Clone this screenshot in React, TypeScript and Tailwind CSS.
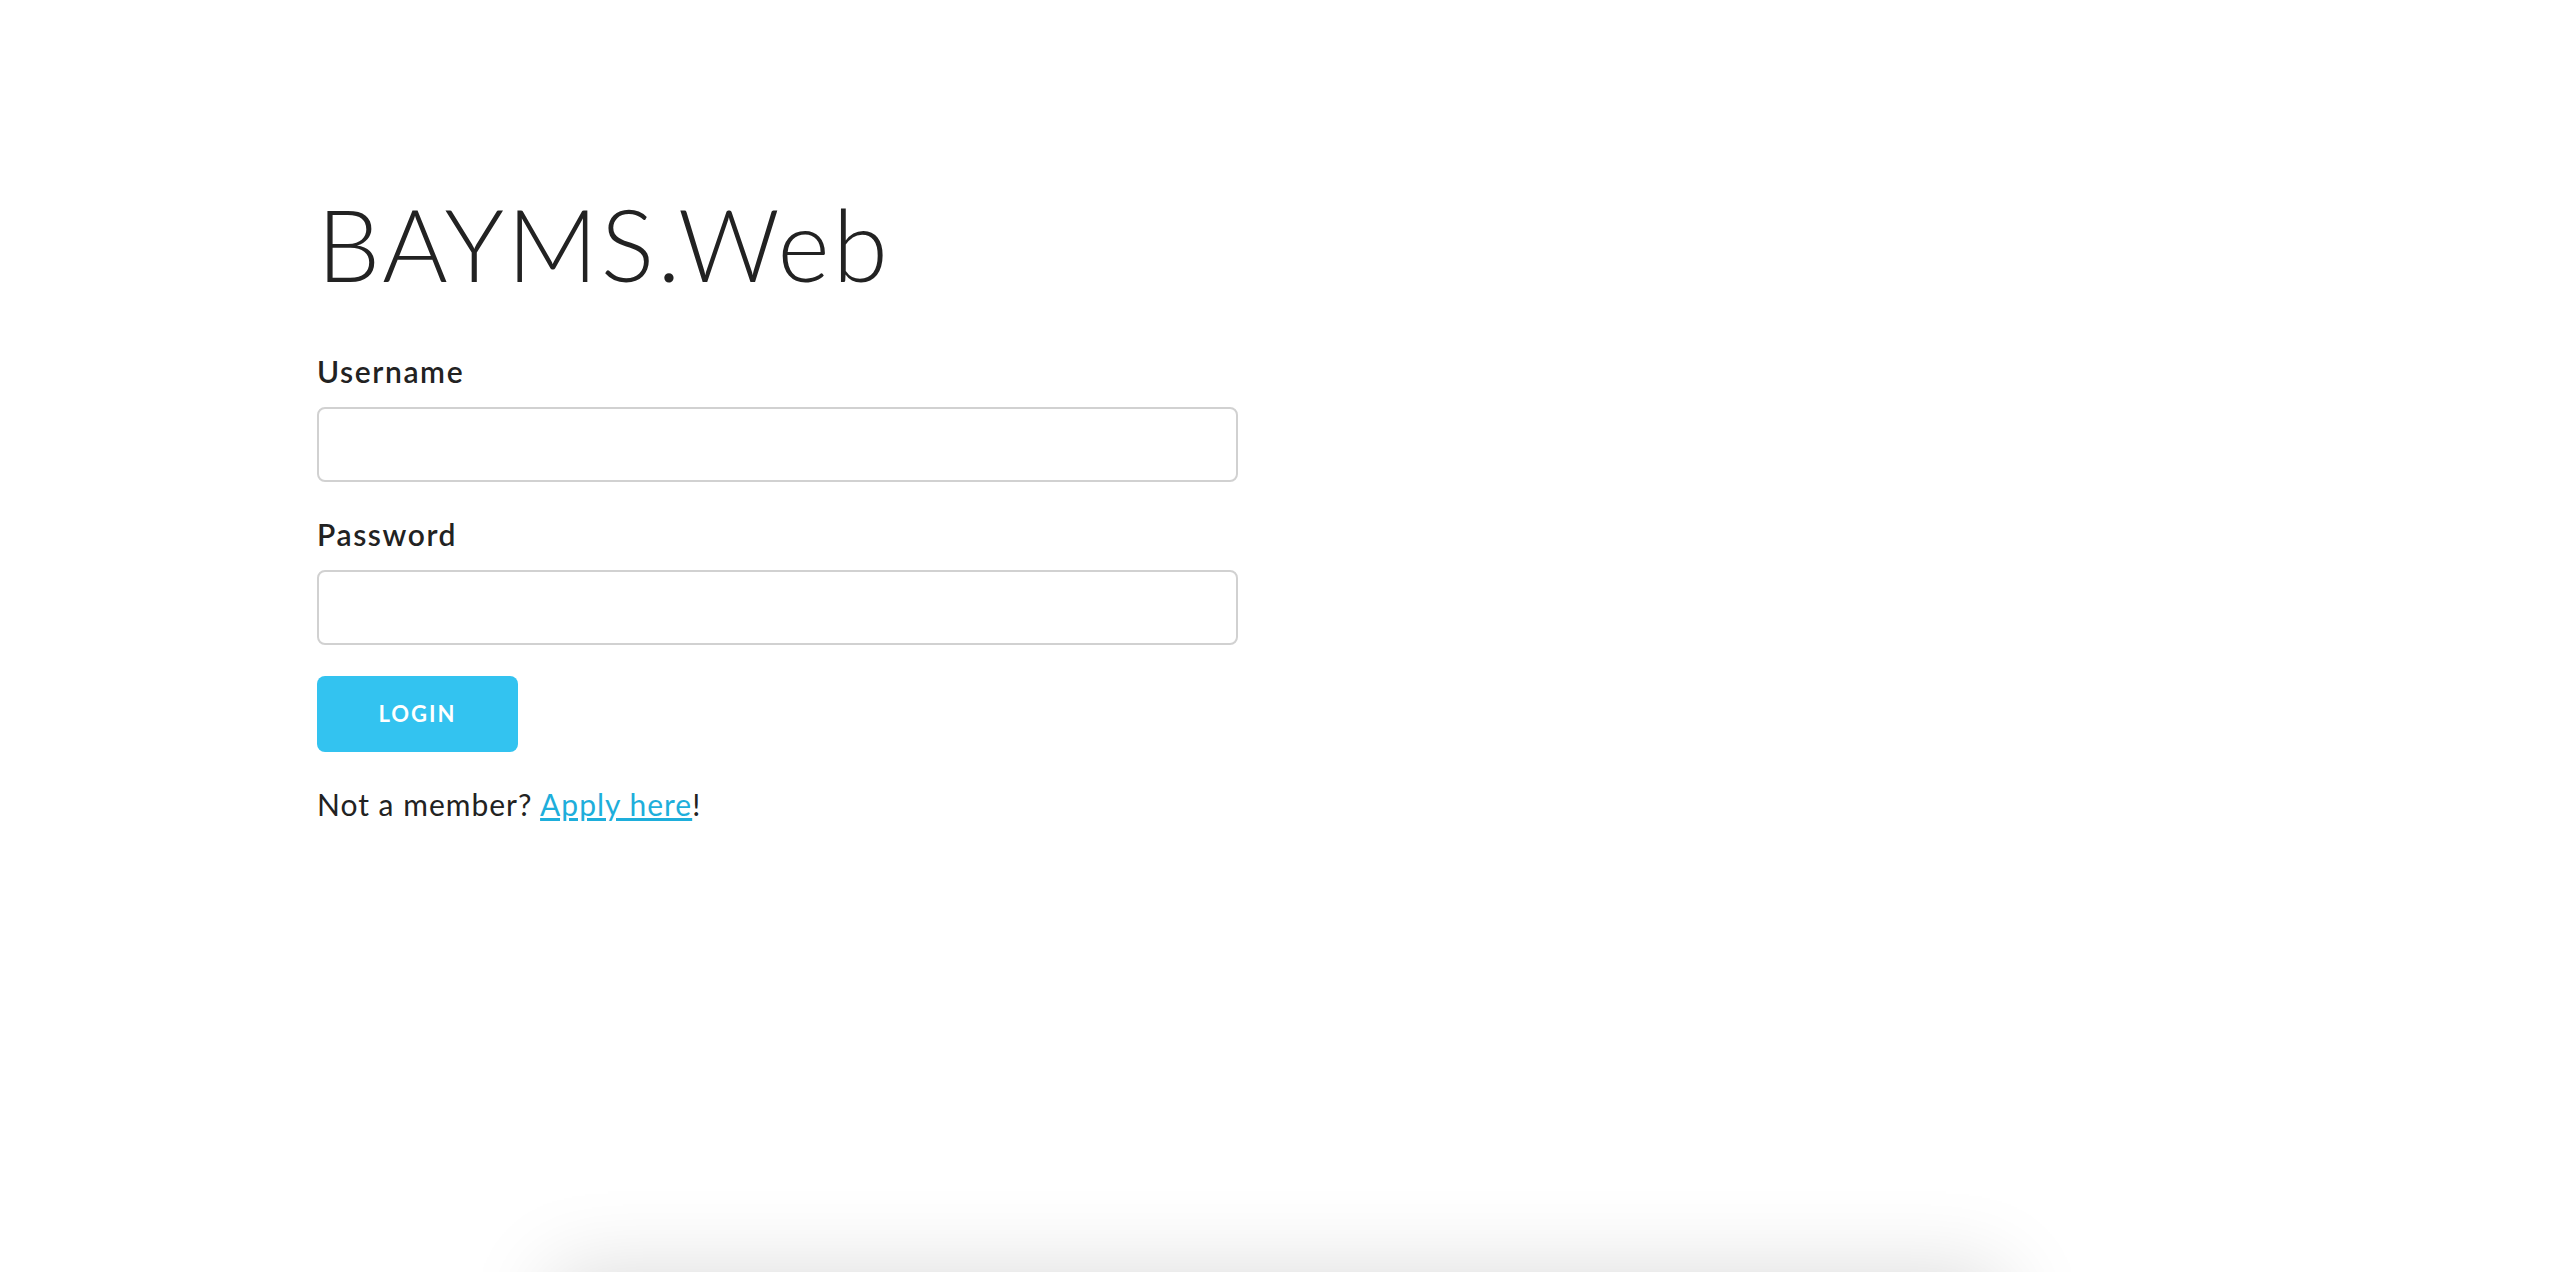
import React from "react";

export default function App() {
  return (
    <div className="bg-white font-['Lato','Liberation_Sans',sans-serif] text-[#222]">
      <div className="h-[1272px] pl-[317px] pt-[183px]">
        <h1 className="m-0 text-[100px] font-light leading-[120px] tracking-[3px] text-[#222]">
          BAYMS.Web
        </h1>
        <form className="mt-[44px] w-[921px]" onSubmit={(e) => e.preventDefault()}>
          <label className="mb-[12px] block text-[30px] font-semibold leading-[48px] tracking-[1.6px]">Username</label>
          <input
            type="text"
            className="box-border block h-[75px] w-full rounded-[8px] border-2 border-[#d1d1d1] bg-white px-[20px] text-[30px] outline-none"
          />
          <label className="mb-[12px] mt-[28px] block text-[30px] font-semibold leading-[48px] tracking-[1.6px]">Password</label>
          <input
            type="password"
            className="box-border block h-[75px] w-full rounded-[8px] border-2 border-[#d1d1d1] bg-white px-[20px] text-[30px] outline-none"
          />
          <button
            type="submit"
            className="mt-[31px] block h-[76px] w-[201px] rounded-[8px] bg-[#33c3f0] text-center text-[22px] font-bold uppercase leading-[76px] tracking-[2px] text-white"
          >
            Login
          </button>
          <p className="m-0 mt-[28px] text-[30px] leading-[48px] tracking-[1px]">
            Not a member?{" "}
            <a href="#" className="text-[#1eaedb] underline">
              Apply here
            </a>
            !
          </p>
        </form>
      </div>
      <div className="mx-auto h-[400px] w-[1450px] bg-white shadow-[0_0_80px_rgba(0,0,0,0.15)]"></div>
    </div>
  );
}
